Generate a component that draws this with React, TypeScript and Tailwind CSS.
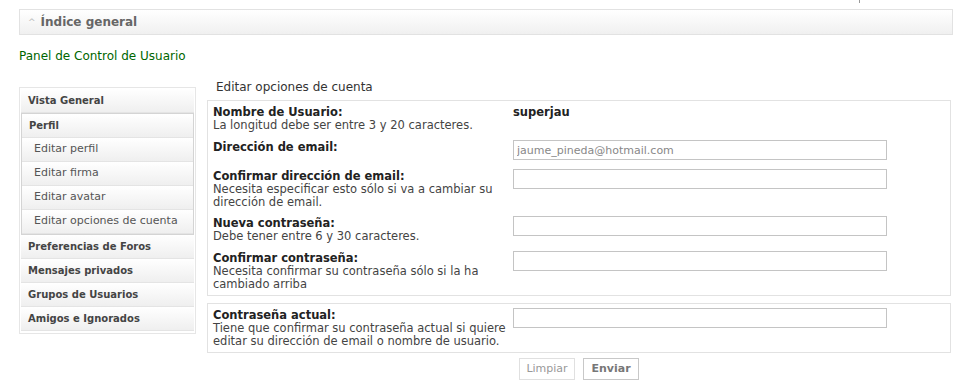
import React from 'react';

const font = { fontFamily: '"DejaVu Sans", Verdana, sans-serif' };

const menuTop = ['Vista General'];
const perfilSub = ['Editar perfil', 'Editar firma', 'Editar avatar', 'Editar opciones de cuenta'];
const menuBottom = ['Preferencias de Foros', 'Mensajes privados', 'Grupos de Usuarios', 'Amigos e Ignorados'];

interface Row {
  label: string;
  help?: string;
  value?: string;
  input?: boolean;
  placeholder?: string;
  pb: string;
}

const rows: Row[] = [
  { label: 'Nombre de Usuario:', help: 'La longitud debe ser entre 3 y 20 caracteres.', value: 'superjau', pb: 'pb-[9px]' },
  { label: 'Dirección de email:', input: true, placeholder: 'jaume_pineda@hotmail.com', pb: 'pb-[10px]' },
  { label: 'Confirmar dirección de email:', help: 'Necesita especificar esto sólo si va a cambiar su dirección de email.', input: true, pb: 'pb-[8px]' },
  { label: 'Nueva contraseña:', help: 'Debe tener entre 6 y 30 caracteres.', input: true, pb: 'pb-[9px]' },
  { label: 'Confirmar contraseña:', help: 'Necesita confirmar su contraseña sólo si la ha cambiado arriba', input: true, pb: 'pb-[4px]' },
];

function MenuItem({ text, sub }: { text: string; sub?: boolean }) {
  return (
    <div
      className={`h-[24px] flex items-center border-b border-[#e4e4e4] bg-gradient-to-b from-white to-[#efefef] ${
        sub ? 'pl-[12px] text-[#555] font-normal text-[11px]' : 'pl-[7px] font-bold text-[#444] text-[10px]'
      }`}
    >
      {text}
    </div>
  );
}

function FormRow({ row }: { row: Row }) {
  return (
    <div className={`flex items-start ${row.pb}`}>
      <div className="w-[300px] shrink-0 leading-[13px] text-[#333]">
        <div className="font-bold text-[#222]">{row.label}</div>
        {row.help && <div className="text-[#444]">{row.help}</div>}
      </div>
      {row.value && <div className="font-bold text-[#222] leading-[13px]">{row.value}</div>}
      {row.input && (
        <input
          className="w-[374px] h-[20px] -mt-[1px] border border-[#c4c4c4] bg-white px-[3px] text-[11px] text-[#888] outline-none"
          style={font}
          defaultValue={row.placeholder ?? ''}
        />
      )}
    </div>
  );
}

export default function App() {
  return (
    <div className="w-[961px] h-[388px] bg-white relative overflow-hidden text-[11px]" style={font}>
      <div className="absolute left-[859px] top-0 w-px h-[3px] bg-[#999]" />
      <div className="pt-[9px] pl-[19px] pr-[8px]">
        <div className="h-[26px] border border-[#e2e2e2] bg-gradient-to-b from-white to-[#f0f0f0] flex items-center pl-[8px]">
          <span className="text-[#bbb] text-[9px] mr-[5px] leading-none">^</span>
          <span className="font-bold text-[12px] text-[#666]">Índice general</span>
        </div>
        <div className="mt-[14px] text-[12px] text-[#006600] leading-[14px]">Panel de Control de Usuario</div>
      </div>

      <div className="flex pl-[19px] mt-[17px]">
        <div className="w-[177px] shrink-0 mt-[7px]">
          <div className="border border-[#e6e6e6] p-[1px] pb-[2px]">
            {menuTop.map((m) => (
              <MenuItem key={m} text={m} />
            ))}
            <div className="border border-[#d4d4d4]">
              <MenuItem text="Perfil" />
              {perfilSub.map((m) => (
                <MenuItem key={m} text={m} sub />
              ))}
            </div>
            {menuBottom.map((m) => (
              <MenuItem key={m} text={m} />
            ))}
          </div>
        </div>

        <div className="ml-[11px] w-[744px] text-[11.5px]">
          <div className="pl-[9px] text-[12px] text-[#333] leading-[14px] h-[20px]">Editar opciones de cuenta</div>
          <div className="border border-[#e2e2e2] pt-[5px] pl-[5px] w-[744px]">
            {rows.map((r) => (
              <FormRow key={r.label} row={r} />
            ))}
          </div>
          <div className="border border-[#e2e2e2] pt-[5px] pb-[4px] pl-[5px] mt-[7px]">
            <div className="flex items-start">
              <div className="w-[300px] shrink-0 leading-[13px]">
                <div className="font-bold text-[#222]">Contraseña actual:</div>
                <div className="text-[#444]">
                  Tiene que confirmar su contraseña actual si quiere editar su dirección de email o nombre de usuario.
                </div>
              </div>
              <input
                className="w-[374px] h-[20px] -mt-[1px] border border-[#c4c4c4] bg-white outline-none"
                style={font}
              />
            </div>
          </div>
          <div className="flex gap-[8px] pl-[312px] mt-[5px]">
            <button
              className="w-[56px] h-[22px] border border-[#e0e0e0] bg-white text-[#999] text-[11px]"
              style={font}
            >
              Limpiar
            </button>
            <button
              className="w-[56px] h-[22px] border border-[#c8c8c8] bg-white text-[#777] font-bold text-[11px]"
              style={font}
            >
              Enviar
            </button>
          </div>
        </div>
      </div>
    </div>
  );
}
